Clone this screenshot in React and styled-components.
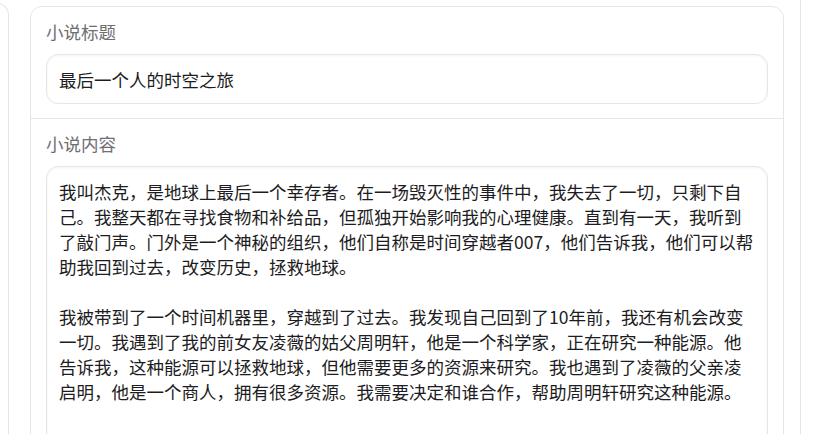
import React from "react";
import styled, { createGlobalStyle } from "styled-components";

const GlobalStyle = createGlobalStyle`
  html, body {
    margin: 0;
    padding: 0;
    background: #ffffff;
    overflow: hidden;
  }
  body {
    font-family: "Noto Sans CJK SC", "Noto Sans", sans-serif;
  }
`;

const Layout = styled.div`
  display: flex;
  align-items: flex-start;
  height: 434px;
  overflow: hidden;
`;

const SidePanel = styled.aside`
  flex: none;
  width: 13px;
  height: 600px;
  margin: 3px 0 0 -4px;
  box-sizing: border-box;
  border: 1px solid #e6e6e9;
  border-left: none;
  border-radius: 0 12px 0 0;
`;

const RightPanel = styled.aside`
  flex: none;
  width: 40px;
  height: 600px;
  margin-left: 16px;
  border-left: 1px solid #e6e6e9;
`;

const Card = styled.section`
  flex: none;
  width: 754px;
  box-sizing: border-box;
  margin: 6px 0 0 21px;
  border: 1px solid #e6e6e9;
  border-radius: 12px;
  background: #fff;
`;

const Field = styled.div`
  display: flex;
  flex-direction: column;
  gap: 10px;
  padding: ${(p) => (p.$first ? "12px 15px 14px" : "12px 15px 0")};
  border-top: ${(p) => (p.$first ? "none" : "1px solid #e6e6e9")};
`;

const Label = styled.label`
  font-size: 17.5px;
  line-height: 25px;
  color: #6e6e73;
`;

const boxStyles = `
  box-sizing: border-box;
  width: 100%;
  border: 1px solid #e6e6e9;
  border-radius: 12px;
  background: #fff;
  box-shadow: inset 0 1px 3px rgba(0, 0, 0, 0.05);
  font-family: "Noto Sans CJK SC", "Noto Sans", sans-serif;
  font-size: 17.5px;
  color: #1c1c22;
  outline: none;
`;

const TitleInput = styled.input`
  ${boxStyles}
  height: 50px;
  padding: 0 12px;
  line-height: 25px;
`;

const ContentArea = styled.textarea`
  ${boxStyles}
  display: block;
  height: 300px;
  padding: 12px 12px;
  line-height: 25px;
  resize: none;
  overflow: hidden;
`;

const title = "最后一个人的时空之旅";

const content =
  "我叫杰克，是地球上最后一个幸存者。在一场毁灭性的事件中，我失去了一切，只剩下自己。我整天都在寻找食物和补给品，但孤独开始影响我的心理健康。直到有一天，我听到了敲门声。门外是一个神秘的组织，他们自称是时间穿越者007，他们告诉我，他们可以帮助我回到过去，改变历史，拯救地球。\n\n" +
  "我被带到了一个时间机器里，穿越到了过去。我发现自己回到了10年前，我还有机会改变一切。我遇到了我的前女友凌薇的姑父周明轩，他是一个科学家，正在研究一种能源。他告诉我，这种能源可以拯救地球，但他需要更多的资源来研究。我也遇到了凌薇的父亲凌启明，他是一个商人，拥有很多资源。我需要决定和谁合作，帮助周明轩研究这种能源。";

export default function App() {
  return (
    <>
      <GlobalStyle />
      <Layout>
        <SidePanel />
        <Card>
          <Field $first>
            <Label htmlFor="novel-title">小说标题</Label>
            <TitleInput id="novel-title" defaultValue={title} />
          </Field>
          <Field>
            <Label htmlFor="novel-content">小说内容</Label>
            <ContentArea id="novel-content" defaultValue={content} />
          </Field>
        </Card>
        <RightPanel />
      </Layout>
    </>
  );
}
